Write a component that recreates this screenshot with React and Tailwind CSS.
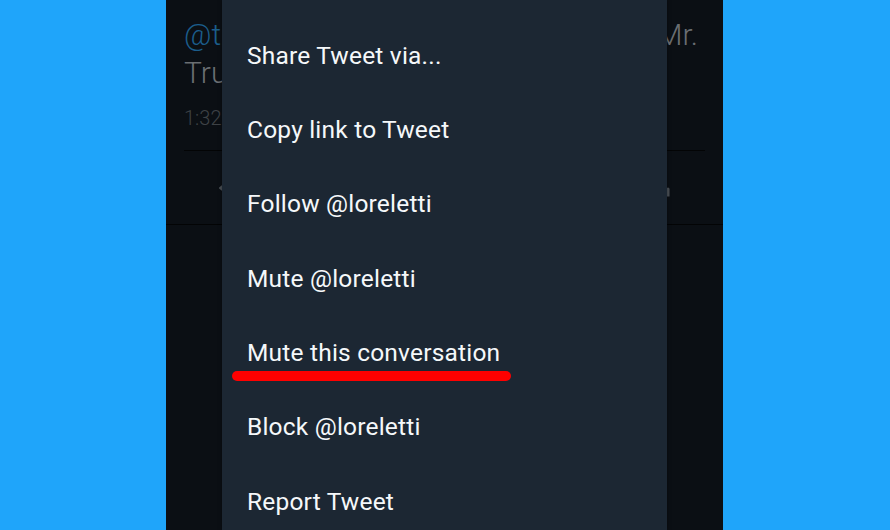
import React from 'react'

const menuItems = [
  'Share Tweet via...',
  'Copy link to Tweet',
  'Follow @loreletti',
  'Mute @loreletti',
  'Mute this conversation',
  'Block @loreletti',
  'Report Tweet',
]

const App = () => {
  return (
    <div className="w-[890px] h-[530px] bg-[#1fa5fa] flex overflow-hidden font-['Roboto',sans-serif]">
      <div className="relative ml-[166px] w-[557px] h-full bg-[#0b0f14]">
        {/* tweet behind the menu */}
        <div className="px-[18px] pt-[16px]">
          <div className="flex justify-between text-[30px] leading-[38px] font-light whitespace-nowrap">
            <span className="text-[#1b5d8b]">@thehill</span>
            <span className="text-[#6a6e72] pr-[7px]">Mr.</span>
          </div>
          <div className="text-[30px] leading-[38px] font-light text-[#6a6e72]">Trump</div>
          <div className="mt-[12px] text-[20px] leading-[28px] font-light text-[#3e4246]">1:32 PM</div>
          <div className="mt-[18px] border-t border-[#030405]"></div>
        </div>
        <div className="h-[74px] flex items-center justify-between pl-[53px] pr-[53px] border-b border-[#030405]">
          <svg width="22" height="22" viewBox="0 0 22 22" fill="none" stroke="#4b5056" strokeWidth="2" strokeLinejoin="round">
            <path d="M1 11l5-4v8z" fill="#4b5056" />
            <path d="M6 11h10a4 4 0 0 1 0 8h-3" />
          </svg>
          <svg width="22" height="22" viewBox="0 0 22 22" fill="none" stroke="#4b5056" strokeWidth="2">
            <path d="M3 8h14l-3-3M19 14H5l3 3" />
          </svg>
          <svg width="22" height="22" viewBox="0 0 22 22" fill="none" stroke="#4b5056" strokeWidth="2">
            <path d="M11 19s-8-5-8-10a4 4 0 0 1 8-1 4 4 0 0 1 8 1c0 5-8 10-8 10z" />
          </svg>
          <svg width="22" height="22" viewBox="0 0 22 22" fill="none" stroke="#4b5056" strokeWidth="3" strokeLinecap="round">
            <path d="M11 3v10M7 7l4-4 4 4M4 12v6h16v-6" />
          </svg>
        </div>

        {/* overflow menu */}
        <div className="absolute left-[56px] top-0 bottom-0 w-[445px] bg-[#1c2733] pt-[19px] shadow-[0_0_4px_rgba(0,0,0,0.4)]">
          {menuItems.map(item => (
            <div
              key={item}
              className="h-[74.3px] pl-[25px] flex items-center text-[24.5px] tracking-[0.2px] text-[#f5f8fa] whitespace-nowrap"
            >
              {item}
            </div>
          ))}
          <div className="absolute left-[10px] top-[371px] w-[279px] h-[10px] rounded-full bg-[#ff0000] blur-[0.6px]"></div>
        </div>
      </div>
    </div>
  )
}

export default App
